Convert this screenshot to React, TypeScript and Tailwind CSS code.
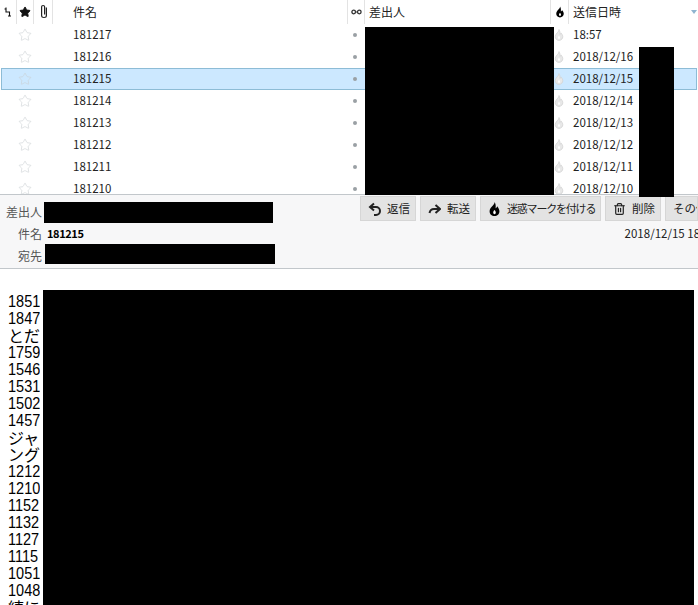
import React from 'react';
import { Star, Trash2 } from 'lucide-react';

const font = { fontFamily: '"Noto Sans CJK JP", "Liberation Sans", sans-serif' };

const rows = [
  { subject: '181217', date: '18:57' },
  { subject: '181216', date: '2018/12/16' },
  { subject: '181215', date: '2018/12/15', selected: true },
  { subject: '181214', date: '2018/12/14' },
  { subject: '181213', date: '2018/12/13' },
  { subject: '181212', date: '2018/12/12' },
  { subject: '181211', date: '2018/12/11' },
  { subject: '181210', date: '2018/12/10' },
];

const bodyLines = ['1851', '1847', 'とだ', '1759', '1546', '1531', '1502', '1457', 'ジャ', 'ング', '1212', '1210', '1152', '1132', '1127', '1115', '1051', '1048', '続に'];

function Redact({ className }: { className: string }) {
  return <div className={`absolute bg-black ${className}`} />;
}

function FlameMark({ className, muted }: { className: string; muted?: boolean }) {
  return (
    <svg viewBox="0 0 12 14" className={className}>
      <path
        d="M6 0.5C6.5 3 2 5 1.5 8.5 1.2 11.5 3.5 13.5 6 13.5s4.8-2 4.5-5C10.2 6.5 9 5.5 8.5 4.5 8.2 5.5 7.8 6 7 6.3 7.4 4 7 2 6 0.5z"
        fill={muted ? '#e8e8e8' : '#000'}
        stroke={muted ? '#d4d4d4' : 'none'}
      />
      <path d="M6 8c-1 1-1.5 2-1 3.2.4.8 1.6.8 2 0 .5-1.2 0-2.2-1-3.2z" fill="#fff" />
    </svg>
  );
}

function ToolButton({ icon, label, className, tight }: { icon: React.ReactNode; label: string; className: string; tight?: boolean }) {
  return (
    <div className={`flex h-[25px] shrink-0 items-center border border-[#d6d6d6] bg-[#e3e3e3] pl-[7px] text-[#222] ${tight ? 'text-[11px] tracking-[-1.2px]' : 'text-[11.5px]'} ${className}`}>
      {icon && <span className="mr-[6px] flex w-[13px] shrink-0 justify-center">{icon}</span>}
      <span className="whitespace-nowrap">{label}</span>
    </div>
  );
}

export default function App() {
  return (
    <div className="relative h-[605px] w-[698px] overflow-hidden bg-white text-[#222]" style={font}>
      {/* thread pane */}
      <div className="h-[194px] overflow-hidden">
        <div className="flex h-[24px] items-center text-[12px]">
          <div className="flex h-full w-[17px] items-center justify-center border-r border-[#e3e3e3]">
            <svg viewBox="0 0 8 10" className="h-[10px] w-[8px]">
              <path d="M2 0.5v4.5h3.5v4M0.5 2h2M4 9h3" fill="none" stroke="#111" strokeWidth="1.1" />
            </svg>
          </div>
          <div className="flex h-full w-[17px] items-center justify-center border-r border-[#e3e3e3]">
            <Star size={12} fill="#111" stroke="#111" />
          </div>
          <div className="flex h-full w-[19px] items-center justify-center border-r border-[#e3e3e3]">
            <svg viewBox="0 0 10 16" className="h-[16px] w-[10px]">
              <path d="M7 4v8a2 2 0 0 1-4 0V3.2a1.2 1.2 0 0 1 2.5 0V11" fill="none" stroke="#222" strokeWidth="1" transform="translate(0 -0.5) scale(1.2 1)" />
            </svg>
          </div>
          <div className="h-full w-[294px] pl-[20px] leading-[24px]">件名</div>
          <div className="flex h-full w-[18px] items-center justify-center border-x border-[#e3e3e3]">
            <svg viewBox="0 0 11 6" className="h-[6px] w-[11px]">
              <circle cx="2.7" cy="3" r="1.8" fill="none" stroke="#333" strokeWidth="1.3" />
              <circle cx="8.3" cy="3" r="1.8" fill="none" stroke="#333" strokeWidth="1.3" />
              <path d="M4.5 3h2" stroke="#333" />
            </svg>
          </div>
          <div className="h-full w-[185px] pl-[4px] leading-[24px]">差出人</div>
          <div className="flex h-full w-[19px] items-center justify-center border-x border-[#e3e3e3]">
            <FlameMark className="h-[12px] w-[10px]" />
          </div>
          <div className="relative h-full flex-1 pl-[4px] leading-[24px]">
            送信日時
            <span className="absolute right-[1px] top-[10px] h-0 w-0 border-x-[3px] border-t-[4px] border-x-transparent border-t-[#8fb4d0]" />
          </div>
        </div>
        {rows.map((r) => (
          <div
            key={r.subject}
            className={`flex h-[22px] items-center pb-[1px] text-[11.5px] ${r.selected ? 'mx-[1px] border border-[#8dbcd6] bg-[#cce8ff]' : ''}`}
          >
            <div className={r.selected ? 'w-[14px]' : 'w-[16px]'} />
            <div className="flex w-[17px] justify-center">
              <Star size={14} strokeWidth={1} className="text-[#c9ced2]" />
            </div>
            <div className="w-[20px]" />
            <div className="w-[294px] pl-[20px]">{r.subject}</div>
            <div className="flex w-[16px] justify-center">
              <span className="h-[4px] w-[4px] rounded-full bg-[#9aa0a4]" />
            </div>
            <div className="w-[186px]" />
            <div className="flex w-[20px] justify-center">
              <FlameMark className="h-[12px] w-[10px]" muted />
            </div>
            <div className="whitespace-nowrap pl-[4px]">{r.date}</div>
          </div>
        ))}
      </div>

      {/* message header */}
      <div className="h-[75px] border-y border-[#c2c7cb] bg-[#f7f7f8] text-[12px]">
        <div className="flex h-[29px] items-start">
          <span className="mt-[8px] w-[42px] text-right text-[#555]">差出人</span>
          <div className="ml-auto flex gap-[4px] pt-[1px]">
            <ToolButton className="w-[56px]" icon={
              <svg viewBox="0 0 13 14" className="h-[14px] w-[13px]">
                <path d="M6 1.500 2 5l4 3.500M2.500 5H8a3.500 3.500 0 0 1 0 8H6" fill="none" stroke="#222" strokeWidth="2" />
              </svg>
            } label="返信" />
            <ToolButton className="w-[56px]" icon={
              <svg viewBox="0 0 13 12" className="h-[12px] w-[13px]">
                <path d="M7.500 2 12 6l-4.500 4M11 6H6C3.500 6 2 7.500 1.500 10" fill="none" stroke="#222" strokeWidth="2" />
              </svg>
            } label="転送" />
            <ToolButton className="w-[121px]" tight icon={<FlameMark className="h-[16px] w-[13px]" />} label="迷惑マークを付ける" />
            <ToolButton className="w-[56px]" icon={<Trash2 size={18} strokeWidth={2.2} />} label="削除" />
            <ToolButton className="w-[33px] overflow-hidden" icon={null} label="その他" />
          </div>
        </div>
        <div className="flex h-[20px] items-center pb-[1px]">
          <span className="w-[42px] text-right text-[#555]">件名</span>
          <span className="ml-[5px] text-[11px] font-bold tracking-[-0.4px] text-black">181215</span>
          <span className="-mr-[18px] ml-auto whitespace-nowrap text-[11.5px]">2018/12/15 18:57</span>
        </div>
        <div className="flex h-[24px] items-center">
          <span className="w-[42px] text-right text-[#555]">宛先</span>
        </div>
      </div>

      {/* message body */}
      <div className="pl-[8px] pt-[24px] text-[16px] leading-[17px] text-black">
        {bodyLines.map((l, i) => (
          <div key={i} className="flex h-[17px] w-[32px] items-center overflow-hidden whitespace-nowrap">
            {/^\d+$/.test(l) ? (
              <span className="inline-block origin-center scale-y-[1.2] font-['Liberation_Sans'] text-[14.5px] leading-[17px]">{l}</span>
            ) : (
              l
            )}
          </div>
        ))}
      </div>

      {/* redactions */}
      <Redact className="left-[365px] top-[27px] h-[168px] w-[189px]" />
      <Redact className="left-[639px] top-[47px] h-[150px] w-[35px]" />
      <Redact className="left-[44px] top-[202px] h-[21px] w-[229px]" />
      <Redact className="left-[45px] top-[244px] h-[20px] w-[230px]" />
      <Redact className="left-[43px] top-[290px] h-[315px] w-[651px]" />
    </div>
  );
}
